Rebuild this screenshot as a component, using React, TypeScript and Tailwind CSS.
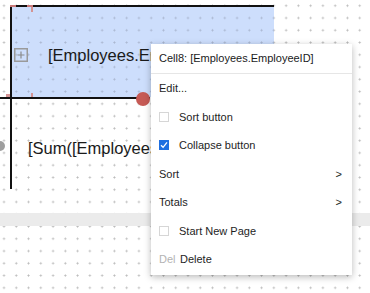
import React from "react";

const dots =
  "bg-fixed bg-[radial-gradient(circle,#b9b9b9_0.75px,transparent_1.3px)] bg-[length:12.28px_12.28px] bg-[position:-2.14px_-0.42px]";
const blueDots =
  "bg-fixed bg-[radial-gradient(circle,#a9b6cf_0.75px,transparent_1.3px)] bg-[length:12.28px_12.28px] bg-[position:-2.14px_-0.42px]";

function Checkbox({ checked }: { checked?: boolean }) {
  if (checked) {
    return (
      <span className="flex h-[10px] w-[10px] items-center justify-center bg-[#1f6fe0]">
        <svg width="8" height="8" viewBox="0 0 8 8">
          <path d="M1 4.2 L3.1 6.3 L7 1.4" fill="none" stroke="#fff" strokeWidth="1.3" />
        </svg>
      </span>
    );
  }
  return <span className="block h-[10px] w-[10px] border border-[#d6d6d6] bg-white" />;
}

function Item({ children, arrow }: { children: React.ReactNode; arrow?: boolean }) {
  return (
    <div className="flex h-[28.5px] items-center justify-between pl-[8px] pr-[10px] text-[#1e1e1e]">
      <div className="flex items-center gap-[10px]">{children}</div>
      {arrow && <span className="text-[11px]">&gt;</span>}
    </div>
  );
}

export default function App() {
  return (
    <div
      className={`relative flex h-[293px] w-[370px] flex-col overflow-hidden bg-white pt-[5px] ${dots}`}
      style={{ fontFamily: '"Liberation Sans", Arial, sans-serif' }}
    >
      {/* report table */}
      <div className="flex pl-[10px]">
        <div className={`flex h-[92px] w-[264px] items-center border-l-2 border-t-2 border-[#111] bg-[#cddefc] pl-[2px] pt-[5px] ${blueDots}`}>
          <svg width="14" height="14" viewBox="0 0 14 14" className="mb-[-1px]">
            <rect x="0.75" y="0.75" width="12.5" height="12.5" fill="none" stroke="#9a9a9a" strokeWidth="1.5" />
            <path d="M7 3.5 V10.5 M3.5 7 H10.5" stroke="#8a8a8a" strokeWidth="1.2" />
          </svg>
          <div className="ml-[20px] w-[103px] overflow-hidden whitespace-nowrap text-[16.5px] leading-[20px] text-[#1a1a1a]">
            [Employees.EmployeeID]
          </div>
        </div>
      </div>
      <div className="h-[2px] w-[150px] bg-[#111]" />
      <div className="flex pl-[10px]">
        <div className="h-[90px] border-l-2 border-[#111] pl-[16px] pt-[39px]">
          <div className="w-[123px] overflow-hidden whitespace-nowrap text-[16.5px] leading-[20px] text-[#1a1a1a]">
            [Sum([Employees.EmployeeID])]
          </div>
        </div>
      </div>
      <div className="mt-[24px] h-[13px] w-full bg-[#ebebeb]" />

      {/* selection handles */}
      <div className="absolute left-[10px] top-[5px] h-[2px] w-[6px] bg-[#c97a7a]" />
      <div className="absolute left-[27px] top-[5px] h-[2px] w-[6px] bg-[#c97a7a]" />
      <div className="absolute left-[31px] top-[7px] h-[5px] w-[2px] bg-[#d49494]" />
      <div className="absolute left-[31px] top-[93px] h-[4px] w-[2px] bg-[#d49494]" />
      <div className="absolute left-[6px] top-[94px] h-[3px] w-[4px] bg-[#d49494]" />
      <div className="absolute left-[136px] top-[91.5px] h-[14px] w-[14px] rounded-full bg-[#c65a55]" />
      <div className="absolute left-[-5px] top-[141px] h-[10px] w-[10px] rounded-full bg-[#9e9e9e]" />

      {/* context menu */}
      <div className="absolute left-[151px] top-[44px] flex h-[231px] w-[201px] flex-col bg-white text-[11px] shadow-[0_2px_7px_rgba(0,0,0,0.28)]">
        <div className="flex h-[30px] items-center border-b border-[#e6e6e6] pl-[8px] text-[#1a1a1a]">
          Cell8: [Employees.EmployeeID]
        </div>
        <Item>Edit...</Item>
        <Item>
          <Checkbox />
          <span>Sort button</span>
        </Item>
        <Item>
          <Checkbox checked />
          <span>Collapse button</span>
        </Item>
        <Item arrow>Sort</Item>
        <Item arrow>Totals</Item>
        <Item>
          <Checkbox />
          <span>Start New Page</span>
        </Item>
        <Item>
          <span className="mr-[-6px] w-[17px] text-[#b3b3b3]">Del</span>
          <span>Delete</span>
        </Item>
      </div>
    </div>
  );
}
